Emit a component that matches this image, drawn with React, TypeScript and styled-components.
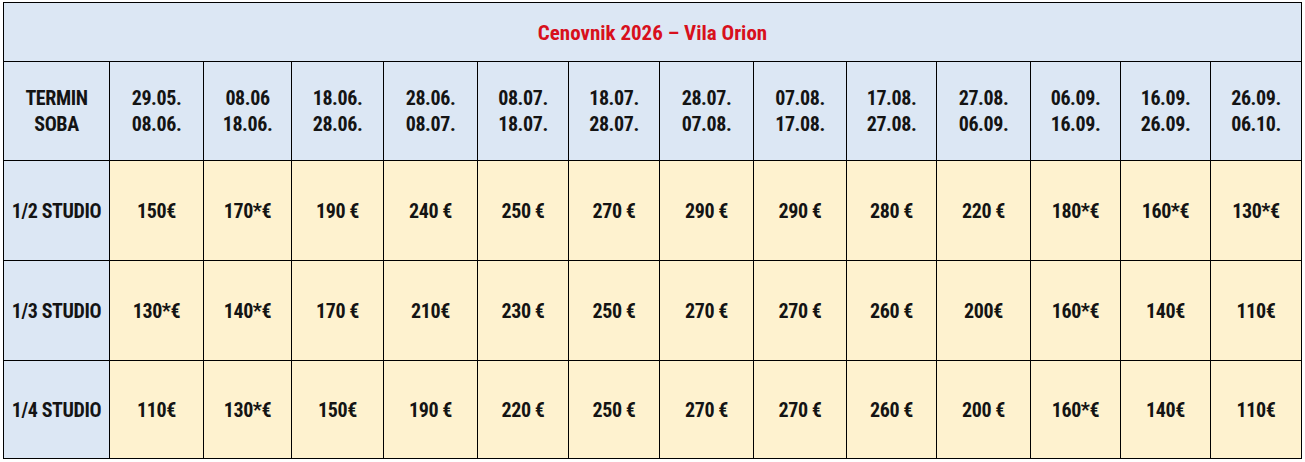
import React from "react";
import styled, { createGlobalStyle } from "styled-components";

const Global = createGlobalStyle`
  html, body { margin: 0; padding: 0; background: #ffffff; }
  body { padding: 2px 0 0 3px; }
`;

const COLS = [105, 93, 87, 91, 93, 90, 90, 93, 92, 89, 93, 89, 89, 90];
const ROWS = [58, 98, 99, 99, 97];

const Grid = styled.div`
  display: grid;
  grid-template-columns: ${COLS.map((c) => `${c}px`).join(" ")};
  grid-template-rows: ${ROWS.map((r) => `${r}px`).join(" ")};
  gap: 1px;
  padding: 1px;
  background: #000;
  width: max-content;
  font-family: "Liberation Sans Narrow", "Roboto Condensed", "DejaVu Sans Condensed", "Liberation Sans", sans-serif;
  font-weight: 700;
  font-size: 20px;
  letter-spacing: -0.4px;
  color: #141414;
`;

const Cell = styled.div<{ $tone: "blue" | "yellow" }>`
  display: flex;
  align-items: center;
  justify-content: center;
  text-align: center;
  background: ${(p) => (p.$tone === "blue" ? "#dce7f4" : "#fef2cf")};
  line-height: 26px;
  white-space: nowrap;
`;

const Title = styled(Cell)`
  grid-column: 1 / -1;
  color: #d8101c;
  font-size: 21px;
  letter-spacing: 0;
  padding-top: 2px;
`;

const Stack = styled.div`
  display: flex;
  flex-direction: column;
`;

const periods: [string, string][] = [
  ["29.05.", "08.06."],
  ["08.06", "18.06."],
  ["18.06.", "28.06."],
  ["28.06.", "08.07."],
  ["08.07.", "18.07."],
  ["18.07.", "28.07."],
  ["28.07.", "07.08."],
  ["07.08.", "17.08."],
  ["17.08.", "27.08."],
  ["27.08.", "06.09."],
  ["06.09.", "16.09."],
  ["16.09.", "26.09."],
  ["26.09.", "06.10."],
];

const rows: { room: string; prices: string[] }[] = [
  {
    room: "1/2 STUDIO",
    prices: ["150€", "170*€", "190 €", "240 €", "250 €", "270 €", "290 €", "290 €", "280 €", "220 €", "180*€", "160*€", "130*€"],
  },
  {
    room: "1/3 STUDIO",
    prices: ["130*€", "140*€", "170 €", "210€", "230 €", "250 €", "270 €", "270 €", "260 €", "200€", "160*€", "140€", "110€"],
  },
  {
    room: "1/4 STUDIO",
    prices: ["110€", "130*€", "150€", "190 €", "220 €", "250 €", "270 €", "270 €", "260 €", "200 €", "160*€", "140€", "110€"],
  },
];

export default function App() {
  return (
    <>
      <Global />
      <Grid>
        <Title $tone="blue">Cenovnik 2026 – Vila Orion</Title>
        <Cell $tone="blue">
          <Stack>
            <span>TERMIN</span>
            <span>SOBA</span>
          </Stack>
        </Cell>
        {periods.map(([a, b], i) => (
          <Cell key={i} $tone="blue">
            <Stack>
              <span>{a}</span>
              <span>{b}</span>
            </Stack>
          </Cell>
        ))}
        {rows.map((r) => (
          <React.Fragment key={r.room}>
            <Cell $tone="blue">{r.room}</Cell>
            {r.prices.map((p, i) => (
              <Cell key={i} $tone="yellow">
                {p}
              </Cell>
            ))}
          </React.Fragment>
        ))}
      </Grid>
    </>
  );
}
